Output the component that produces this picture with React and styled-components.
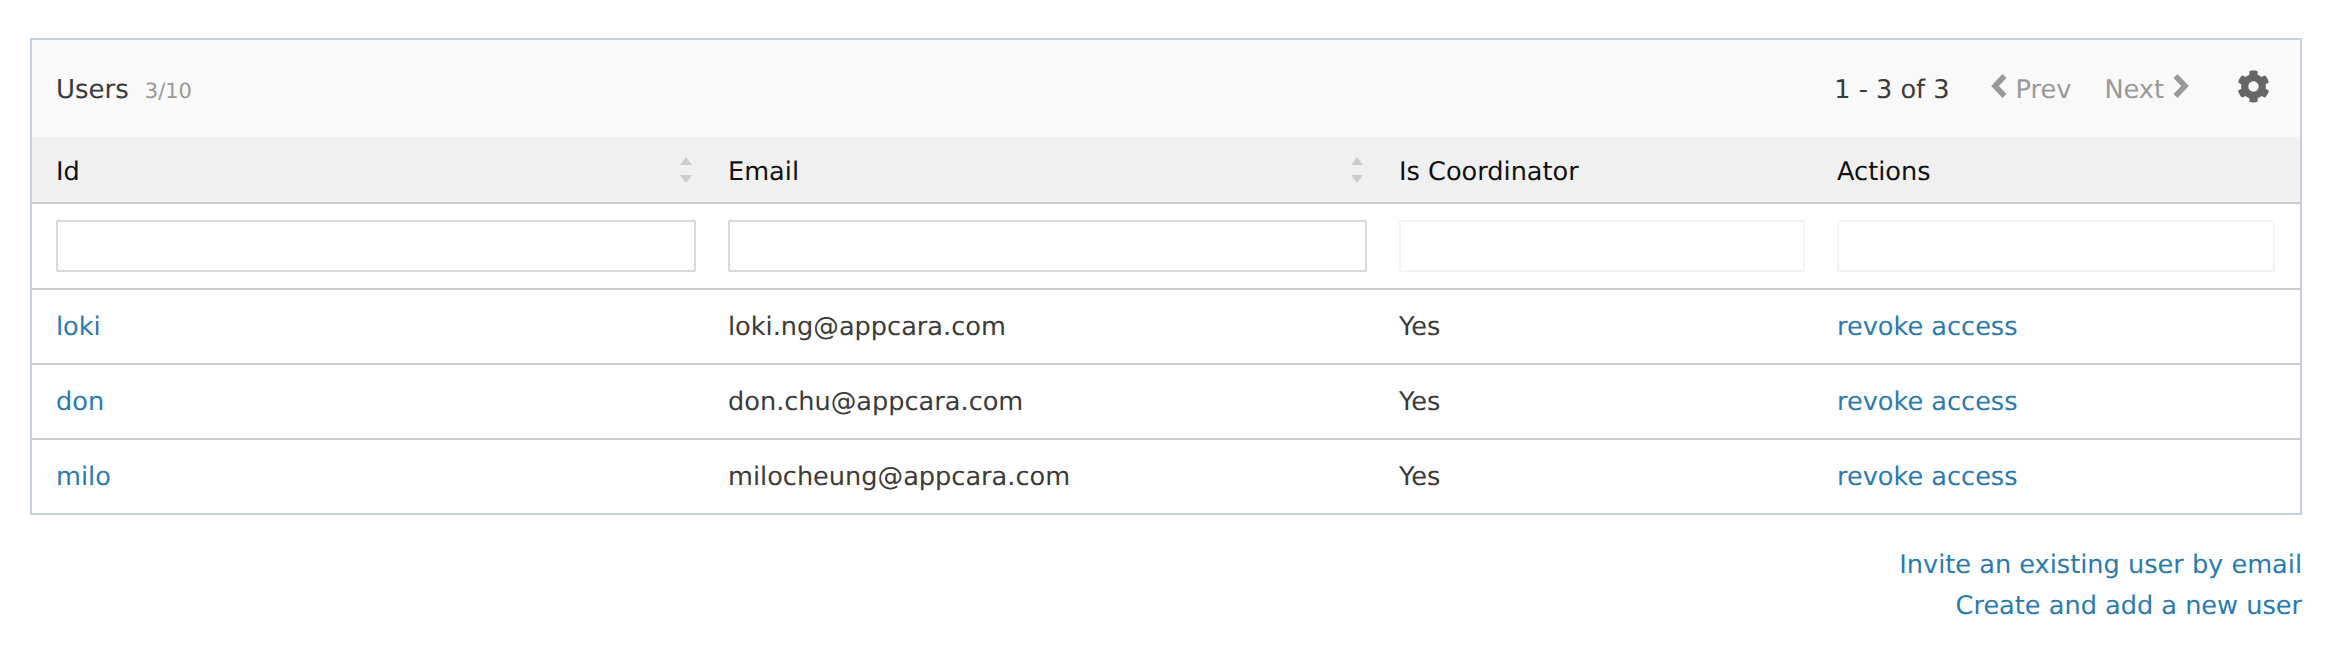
import React from 'react';
import styled, { createGlobalStyle } from 'styled-components';
import { FaCog } from 'react-icons/fa';

const GlobalStyle = createGlobalStyle`
  html, body {
    margin: 0;
    background: #fff;
    font-family: "DejaVu Sans", sans-serif;
    font-size: 25.6px;
    color: #3a3a3a;
    text-rendering: geometricPrecision;
  }
`;

const Page = styled.div`
  padding: 38px 32px 0 30px;
`;

const Panel = styled.div`
  border: 2px solid #c5d0e4;
`;

const Toolbar = styled.div`
  display: flex;
  align-items: center;
  justify-content: space-between;
  box-sizing: border-box;
  height: 97px;
  padding: 2px 30px 0 24px;
  background: #f9f9f9;
`;

const Title = styled.div`
  display: flex;
  align-items: baseline;
  gap: 16px;
  font-size: 26px;
`;

const Count = styled.span`
  font-size: 21px;
  color: #999;
`;

const Pagination = styled.div`
  display: flex;
  align-items: center;
`;

const PageInfo = styled.span`
  margin-right: 41px;
`;

const PageButton = styled.span`
  display: flex;
  align-items: center;
  gap: 9px;
  margin-right: ${(p) => p.$gap}px;
  color: #999;
`;

const Chevron = styled.svg`
  width: 16px;
  height: 24px;
  margin-top: -7px;
  fill: none;
  stroke: #999;
  stroke-width: 5.5;
`;

const Gear = styled(FaCog)`
  width: 33px;
  height: 33px;
  margin-top: -7px;
  color: #666;
`;

const Row = styled.div`
  display: grid;
  grid-template-columns: 672px 671px 438px 1fr;
  align-items: center;
  height: ${(p) => p.$height}px;
  background: ${(p) => p.$bg || '#fff'};
  border-bottom: ${(p) => (p.$last ? 'none' : '2px solid #ccc')};
`;

const HeadCell = styled.div`
  display: flex;
  align-items: center;
  justify-content: space-between;
  padding: 4px 12px 0 24px;
  color: #111;
`;

const SortIcon = styled.svg`
  width: 12px;
  height: 26px;
  margin-top: -3px;
  fill: #ccc;
`;

const FilterCell = styled.div`
  padding: 0 ${(p) => p.$right}px 0 24px;
`;

const FilterInput = styled.input`
  display: block;
  width: 100%;
  height: 52px;
  box-sizing: border-box;
  background: #fff;
  border: 2px solid ${(p) => (p.disabled ? '#f3f3f3' : '#dadada')};
  border-radius: 2px;
  outline: none;
`;

const Cell = styled.div`
  padding: 0 24px;
`;

const Link = styled.a`
  color: #2a7ab0;
  text-decoration: none;
`;

const FooterLinks = styled.div`
  display: flex;
  flex-direction: column;
  align-items: flex-end;
  margin-top: 30px;
  line-height: 41px;
`;

const users = [
  { id: 'loki', email: 'loki.ng@appcara.com' },
  { id: 'don', email: 'don.chu@appcara.com' },
  { id: 'milo', email: 'milocheung@appcara.com' },
];

const Sort = () => (
  <SortIcon viewBox="0 0 12 26">
    <path d="M6 0l6 8H0z" />
    <path d="M0 18h12l-6 8z" />
  </SortIcon>
);

const App = () => (
  <Page>
    <GlobalStyle />
    <Panel>
      <Toolbar>
        <Title>
          <span>Users</span>
          <Count>3/10</Count>
        </Title>
        <Pagination>
          <PageInfo>1 - 3 of 3</PageInfo>
          <PageButton $gap={33}>
            <Chevron viewBox="0 0 16 24">
              <path d="M13.5 2L4 12l9.5 10" />
            </Chevron>
            Prev
          </PageButton>
          <PageButton $gap={48}>
            Next
            <Chevron viewBox="0 0 16 24">
              <path d="M2.5 2L12 12 2.5 22" />
            </Chevron>
          </PageButton>
          <Gear />
        </Pagination>
      </Toolbar>
      <Row $height={65} $bg="#f0f0f0">
        <HeadCell>
          Id
          <Sort />
        </HeadCell>
        <HeadCell>
          Email
          <Sort />
        </HeadCell>
        <HeadCell>Is Coordinator</HeadCell>
        <HeadCell>Actions</HeadCell>
      </Row>
      <Row $height={84}>
        <FilterCell $right={8}>
          <FilterInput />
        </FilterCell>
        <FilterCell $right={8}>
          <FilterInput />
        </FilterCell>
        <FilterCell $right={8}>
          <FilterInput disabled />
        </FilterCell>
        <FilterCell $right={25}>
          <FilterInput disabled />
        </FilterCell>
      </Row>
      {users.map((user, i) => (
        <Row key={user.id} $height={73} $last={i === users.length - 1}>
          <Cell>
            <Link href="#">{user.id}</Link>
          </Cell>
          <Cell>{user.email}</Cell>
          <Cell>Yes</Cell>
          <Cell>
            <Link href="#">revoke access</Link>
          </Cell>
        </Row>
      ))}
    </Panel>
    <FooterLinks>
      <Link href="#">Invite an existing user by email</Link>
      <Link href="#">Create and add a new user</Link>
    </FooterLinks>
  </Page>
);

export default App;
